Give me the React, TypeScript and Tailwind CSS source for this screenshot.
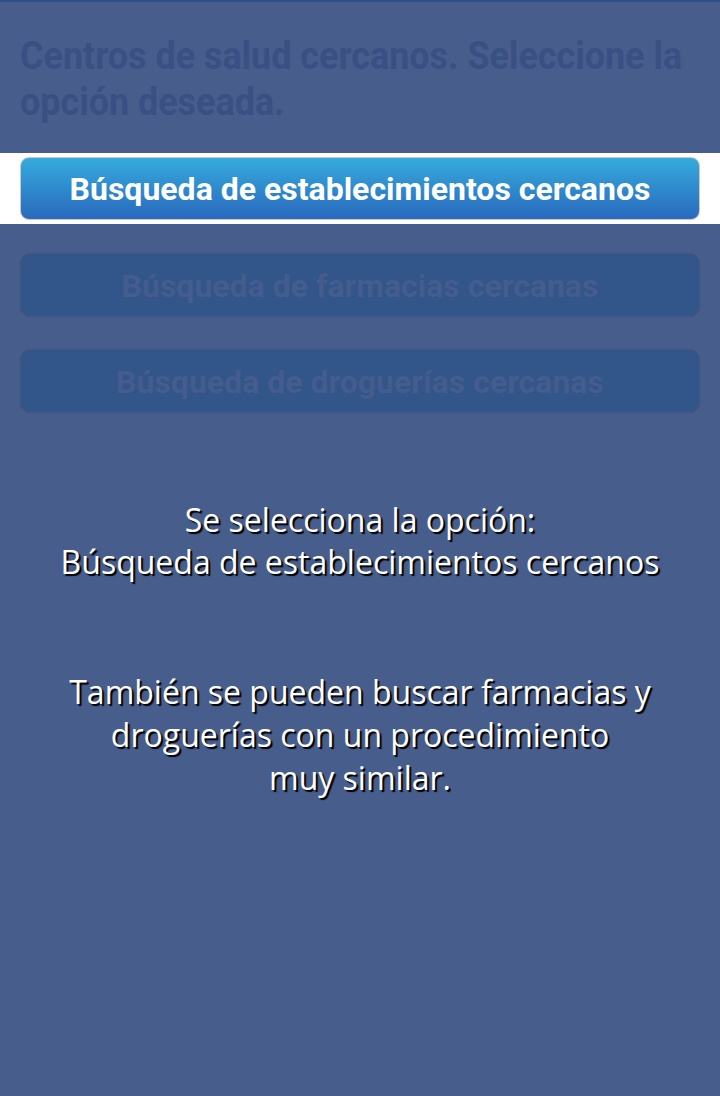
import React from "react";

export default function App() {
  return (
    <div className="w-[720px] h-[1096px] bg-[#475d8b] border-t-2 border-[#2f4f8c] overflow-hidden flex flex-col">
      <div className="px-[20px] pt-[31px] text-[#3a5084] font-bold text-[38px] leading-[46px] [font-family:Roboto,sans-serif]">
        <span className="inline-block origin-left scale-x-[0.945] whitespace-nowrap">Centros de salud cercanos. Seleccione la</span>
        <br />
        <span className="inline-block origin-left scale-x-[0.945] whitespace-nowrap">opción deseada.</span>
      </div>
      <div className="mt-[28px] bg-white py-[4px] px-[20px]">
        <div className="h-[63px] rounded-[9px] border border-[#c9c9c9] bg-gradient-to-b from-[#36abdc] to-[#2a69bd] flex items-center justify-center">
          <span className="text-white font-bold text-[32px] [font-family:Roboto,sans-serif] whitespace-nowrap">Búsqueda de establecimientos cercanos</span>
        </div>
      </div>
      <div className="mt-[30px] px-[21px] flex flex-col gap-[34px]">
        <div className="h-[62px] rounded-[9px] bg-[#32558a] shadow-[0_0_2px_rgba(40,60,110,0.6)] flex items-center justify-center pt-[2px]">
          <span className="text-[#445c8e] font-bold text-[32px] [font-family:Roboto,sans-serif] whitespace-nowrap">Búsqueda de farmacias cercanas</span>
        </div>
        <div className="h-[62px] rounded-[9px] bg-[#32558a] shadow-[0_0_2px_rgba(40,60,110,0.6)] flex items-center justify-center pt-[2px]">
          <span className="text-[#445c8e] font-bold text-[32px] [font-family:Roboto,sans-serif] whitespace-nowrap">Búsqueda de droguerías cercanas</span>
        </div>
      </div>
      <div className="mt-[87px] flex flex-col items-center text-white text-[32px] leading-[42px] [font-family:'Open_Sans',sans-serif] [text-shadow:2px_2px_1px_#000] text-center">
        <div>Se selecciona la opción:</div>
        <div>Búsqueda de establecimientos cercanos</div>
      </div>
      <div className="mt-[87px] flex flex-col items-center text-white text-[32px] leading-[43px] [font-family:'Open_Sans',sans-serif] [text-shadow:2px_2px_1px_#000] text-center">
        <div>También se pueden buscar farmacias y</div>
        <div>droguerías con un procedimiento</div>
        <div>muy similar.</div>
      </div>
    </div>
  );
}
